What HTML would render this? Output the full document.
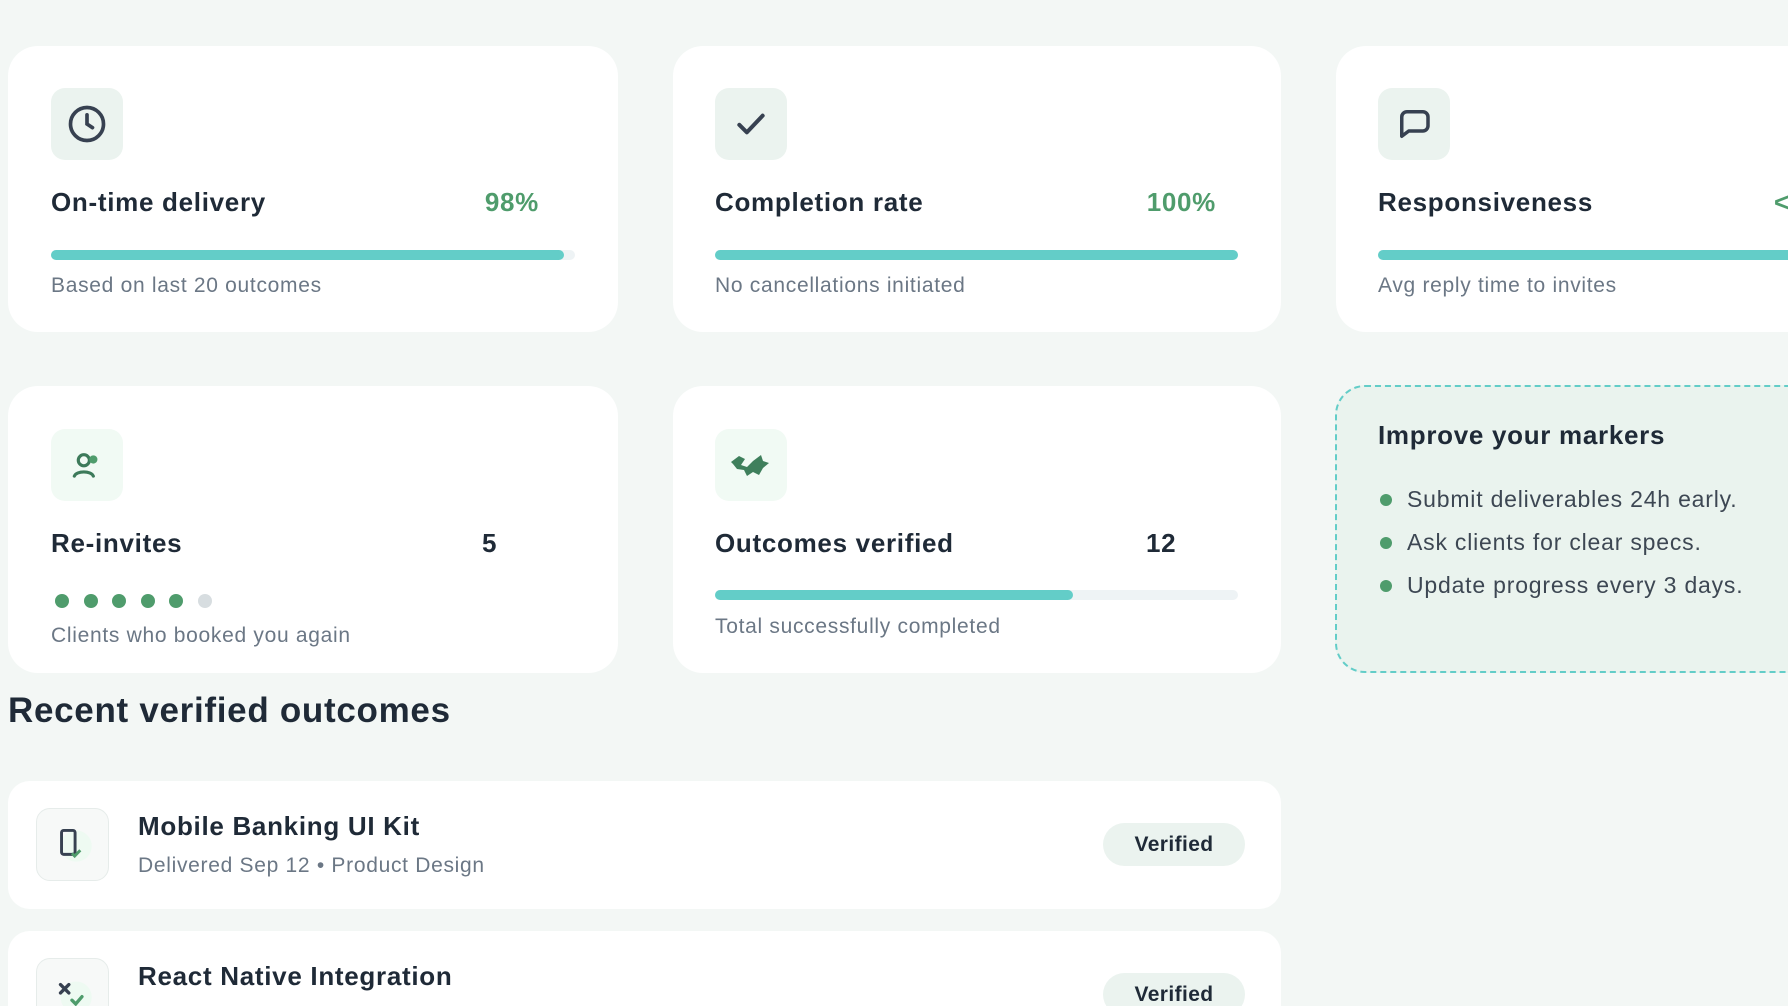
<!DOCTYPE html>
<html><head><meta charset="utf-8"><style>
*{margin:0;padding:0;box-sizing:border-box}
html,body{width:1788px;height:1006px;overflow:hidden}
body{background:#f3f7f5;font-family:"Liberation Sans",sans-serif;color:#1f2a37;position:relative}
.card{position:absolute;background:#fff;border-radius:30px}
.ib{position:absolute;width:72px;height:72px;border-radius:14px;background:#ebf3ef;display:flex;align-items:center;justify-content:center}
.t{position:absolute;font-size:26px;font-weight:bold;color:#1f2a37;line-height:30px;letter-spacing:0.7px}
.v{position:absolute;font-size:26px;font-weight:bold;color:#4f9c6c;line-height:30px;letter-spacing:0.7px}
.s{position:absolute;font-size:21px;color:#6b7785;line-height:26px;letter-spacing:0.7px}
.bar{position:absolute;height:10px;border-radius:5px;background:#eef3f5}
.bar i{display:block;height:10px;border-radius:5px;background:#63cdc8}
.dot{position:absolute;width:14px;height:14px;border-radius:50%;background:#4f9c6c}
.pill{position:absolute;width:142px;height:43px;border-radius:22px;background:#ebf3ef;font-weight:bold;font-size:21px;display:flex;align-items:center;justify-content:center;color:#1f2a37;letter-spacing:0.4px}
.li{position:absolute;font-size:23px;color:#3d4753;line-height:28px;letter-spacing:0.8px}
.bl{position:absolute;width:12px;height:12px;border-radius:50%;background:#4f9c6c}
</style></head><body>

<div class="card" style="left:8px;top:46px;width:610px;height:286px"></div>
<div class="ib" style="left:51px;top:88px"><svg width="44" height="44" viewBox="0 0 24 24" fill="none" stroke="#374151" stroke-width="2" stroke-linecap="round"><circle cx="12" cy="12" r="9"/><path d="M12 7v5l3 2"/></svg></div>
<div class="t" style="left:51px;top:187px">On-time delivery</div>
<div class="v" style="left:439px;top:187px;width:100px;text-align:right">98%</div>
<div class="bar" style="left:51px;top:250px;width:524px"><i style="width:513px"></i></div>
<div class="s" style="left:51px;top:273px">Based on last 20 outcomes</div>

<div class="card" style="left:673px;top:46px;width:608px;height:286px"></div>
<div class="ib" style="left:715px;top:88px"><svg width="40" height="40" viewBox="0 0 24 24" fill="none" stroke="#374151" stroke-width="2.4" stroke-linecap="round" stroke-linejoin="round"><path d="M5 12.5l4.5 4.5L19 7"/></svg></div>
<div class="t" style="left:715px;top:187px">Completion rate</div>
<div class="v" style="left:1100px;top:187px;width:116px;text-align:right">100%</div>
<div class="bar" style="left:715px;top:250px;width:523px"><i style="width:523px"></i></div>
<div class="s" style="left:715px;top:273px">No cancellations initiated</div>

<div class="card" style="left:1336px;top:46px;width:500px;height:286px"></div>
<div class="ib" style="left:1378px;top:88px"><svg width="42" height="42" viewBox="0 0 24 24" fill="none" stroke="#374151" stroke-width="2" stroke-linejoin="round"><path d="M5 18V8a3 3 0 0 1 3-3h9a3 3 0 0 1 3 3v5a3 3 0 0 1-3 3H9l-4 3z"/></svg></div>
<div class="t" style="left:1378px;top:187px">Responsiveness</div>
<div class="v" style="left:1774px;top:187px">&lt;</div>
<div class="bar" style="left:1378px;top:250px;width:500px"><i style="width:500px"></i></div>
<div class="s" style="left:1378px;top:273px">Avg reply time to invites</div>

<div class="card" style="left:8px;top:386px;width:610px;height:287px"></div>
<div class="ib" style="left:51px;top:429px;background:#f1faf4"><svg width="38" height="38" viewBox="0 0 24 24" fill="none" stroke="#3d7a5a" stroke-width="2" stroke-linecap="round"><circle cx="10" cy="9" r="3.5"/><path d="M4 19c1.5-3.5 10.5-3.5 12 0"/><circle cx="16" cy="8.5" r="2.6" fill="#4f9c6c" stroke="none"/></svg></div>
<div class="t" style="left:51px;top:528px">Re-invites</div>
<div class="t" style="left:482px;top:528px">5</div>
<div class="dot" style="left:55px;top:594px"></div>
<div class="dot" style="left:84px;top:594px"></div>
<div class="dot" style="left:112px;top:594px"></div>
<div class="dot" style="left:141px;top:594px"></div>
<div class="dot" style="left:169px;top:594px"></div>
<div class="dot" style="left:198px;top:594px;background:#d7dde0"></div>
<div class="s" style="left:51px;top:623px">Clients who booked you again</div>

<div class="card" style="left:673px;top:386px;width:608px;height:287px"></div>
<div class="ib" style="left:715px;top:429px;background:#f1faf4"><svg width="44" height="30" viewBox="0 0 44 30"><path d="M2 12l8-6 6 3-4 6 6 2 6-6 8-6 2 6 6 2-6 5-4 7-6-3-6 4-3-6-7-1-4-5z" fill="#3f7f5c"/></svg></div>
<div class="t" style="left:715px;top:528px">Outcomes verified</div>
<div class="t" style="left:1146px;top:528px">12</div>
<div class="bar" style="left:715px;top:590px;width:523px"><i style="width:358px"></i></div>
<div class="s" style="left:715px;top:614px">Total successfully completed</div>

<div style="position:absolute;left:1335px;top:385px;width:520px;height:288px;border:2px dashed #63cdc8;border-radius:30px;background:#eaf3ee"></div>
<div class="t" style="left:1378px;top:420px">Improve your markers</div>
<div class="bl" style="left:1380px;top:494px"></div><div class="li" style="left:1407px;top:485px">Submit deliverables 24h early.</div>
<div class="bl" style="left:1380px;top:537px"></div><div class="li" style="left:1407px;top:528px">Ask clients for clear specs.</div>
<div class="bl" style="left:1380px;top:580px"></div><div class="li" style="left:1407px;top:571px">Update progress every 3 days.</div>

<div style="position:absolute;left:8px;top:691px;font-size:35px;font-weight:bold;color:#1f2a37;line-height:40px;letter-spacing:0.7px">Recent verified outcomes</div>

<div class="card" style="left:8px;top:781px;width:1273px;height:128px;border-radius:22px"></div>
<div class="ib" style="left:36px;top:808px;width:73px;height:73px;background:#f7f9f8;border:1px solid #e6ecea"><svg width="50" height="50" viewBox="0 0 24 24" fill="none" stroke="#374151" stroke-width="1.4"><circle cx="13.5" cy="12.5" r="7.5" fill="#eefaf2" stroke="none"/><rect x="6.5" y="5" width="6.5" height="11.5" rx="1"/><path d="M11.5 16l1.3 1.3L15.5 14.5" stroke="#4f9c6c"/></svg></div>
<div class="t" style="left:138px;top:811px">Mobile Banking UI Kit</div>
<div class="s" style="left:138px;top:853px">Delivered Sep 12 • Product Design</div>
<div class="pill" style="left:1103px;top:823px">Verified</div>

<div class="card" style="left:8px;top:931px;width:1273px;height:75px;border-radius:22px 22px 0 0"></div>
<div style="position:absolute;left:36px;top:958px;width:73px;height:48px;overflow:hidden"><div class="ib" style="left:0;top:0;width:73px;height:73px;background:#f7f9f8;border:1px solid #e6ecea"><svg width="50" height="50" viewBox="0 0 24 24" fill="none" stroke="#374151" stroke-width="1.6" stroke-linecap="round"><circle cx="13.5" cy="13" r="7.5" fill="#eefaf2" stroke="none"/><path d="M6 7l4 4M10 7l-4 4"/><path d="M11.5 14.5l1.8 1.8 3-3.5" stroke="#4f9c6c"/></svg></div></div>
<div class="t" style="left:138px;top:961px">React Native Integration</div>
<div class="pill" style="left:1103px;top:973px">Verified</div>

</body></html>
